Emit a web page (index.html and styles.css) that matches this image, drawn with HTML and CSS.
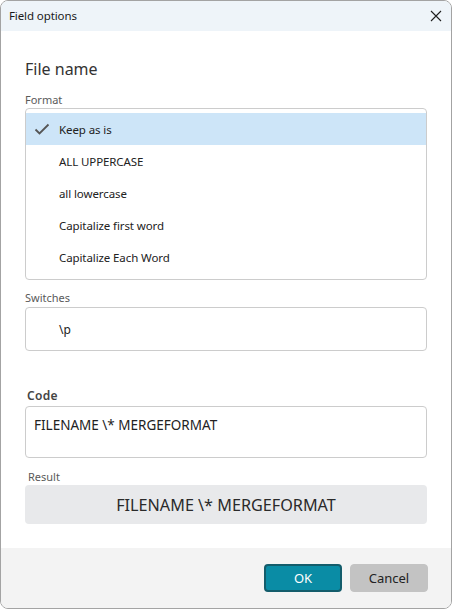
FILE: index.html
```html
<!DOCTYPE html>
<html>
<head>
<meta charset="utf-8">
<title>Field options</title>
<link rel="stylesheet" href="styles.css">
</head>
<body>
<div class="window">
  <div class="titlebar">
    <span class="title">Field options</span>
    <svg class="close" width="12" height="12" viewBox="0 0 12 12"><path d="M1 1 L11 11 M11 1 L1 11" stroke="#1f1f1f" stroke-width="1.1" fill="none"/></svg>
  </div>
  <div class="content">
    <h1 class="heading">File name</h1>
    <div class="label">Format</div>
    <ul class="list">
      <li class="item selected"><svg class="check" width="16" height="12" viewBox="0 0 16 12"><path d="M1.5 6.5 L5.5 10.5 L14.5 1.5" stroke="#555" stroke-width="1.8" fill="none"/></svg>Keep as is</li>
      <li class="item">ALL UPPERCASE</li>
      <li class="item">all lowercase</li>
      <li class="item">Capitalize first word</li>
      <li class="item">Capitalize Each Word</li>
    </ul>
    <div class="label switches-label">Switches</div>
    <div class="switches">\p</div>
    <div class="code-label">Code</div>
    <div class="code">FILENAME \* MERGEFORMAT</div>
    <div class="label result-label">Result</div>
    <div class="result">FILENAME \* MERGEFORMAT</div>
  </div>
  <div class="footer">
    <button class="btn ok">OK</button>
    <button class="btn cancel">Cancel</button>
  </div>
</div>
</body>
</html>
```
FILE: styles.css
```css
* { box-sizing: border-box; }
html, body { margin: 0; padding: 0; background: #ffffff; }
body { font-family: "Noto Sans", "Open Sans", sans-serif; color: #1f1f1f; }
.window {
  width: 452px; height: 609px;
  border: 1px solid #a3a3a3;
  border-radius: 8px;
  overflow: hidden;
  display: flex; flex-direction: column;
  background: #ffffff;
}
.titlebar {
  height: 30px; flex: none;
  background: #eef4f9;
  display: flex; align-items: center; justify-content: space-between;
  padding: 0 9px 0 8px;
}
.title { font-size: 11.5px; line-height: 16px; color: #1a1a1a; letter-spacing: -0.1px; }
.close { display: block; }
.content { flex: 1; padding: 28px 24px 0 24px; }
.heading { margin: 0; font-size: 16px; font-weight: 400; line-height: 20px; color: #333; }
.label { font-size: 11px; line-height: 14px; color: #5a5a5a; margin-top: 14px; margin-bottom: 1px; }
.list {
  list-style: none; margin: 0;
  border: 1px solid #cccccc; border-radius: 4px;
  padding: 4px 0 6px 0;
}
.item {
  height: 32px; display: flex; align-items: center;
  padding-left: 33px; font-size: 11.5px; letter-spacing: -0.1px; color: #222;
}
.item.selected { background: #cde5f8; padding-left: 8px; }
.check { margin-right: 9px; }
.switches-label { margin-top: 11px; margin-bottom: 2px; }
.switches {
  height: 44px; border: 1px solid #cccccc; border-radius: 4px;
  display: flex; align-items: center; padding-left: 33px; font-size: 12px; color: #222;
}
.code-label { margin-top: 38px; font-size: 12px; font-weight: 600; line-height: 14px; color: #444; padding-left: 2px; letter-spacing: 0.3px; margin-bottom: 3px; }
.code {
  height: 52px; border: 1px solid #cccccc; border-radius: 4px;
  padding: 9px 8px; font-size: 13.5px; line-height: 18px; color: #222;
}
.result-label { margin-top: 12px; padding-left: 3px; }
.result {
  height: 39px; background: #e8e9eb; border-radius: 4px;
  display: flex; align-items: center; justify-content: center;
  font-size: 16.2px; color: #2a2a2a;
}
.footer {
  height: 60px; flex: none; background: #f3f3f3;
  display: flex; justify-content: flex-end; align-items: flex-start;
  gap: 8px; padding: 16px 23px 0 0;
}
.btn {
  width: 78px; height: 28px; border-radius: 4px;
  font-family: "Noto Sans", "Open Sans", sans-serif; font-size: 13px;
  padding: 0; cursor: default;
}
.ok { background: #0a8ca5; border: 2px solid #135c6b; color: #ffffff; }
.cancel { background: #c3c3c3; border: 1px solid #c3c3c3; color: #222; }
```
